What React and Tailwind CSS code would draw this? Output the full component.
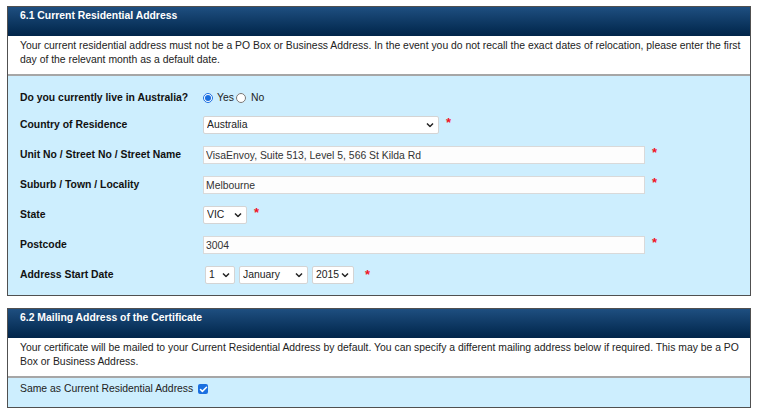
import { Check } from 'lucide-react';

const FONT = { fontFamily: '"Liberation Sans", Arial, sans-serif' };

function Star() {
  return <span className="text-[#f0141e] font-bold text-[13px] leading-none -mt-[6px] ml-[7px]">*</span>;
}

function Chevron() {
  return (
    <svg width="8" height="5" viewBox="0 0 8 5" className="absolute right-[5px] top-1/2 -translate-y-1/2 pointer-events-none">
      <path d="M1 1l3 3 3-3" fill="none" stroke="#222" strokeWidth="1.5" />
    </svg>
  );
}

function Select({ value, className }) {
  return (
    <div className={`relative h-[18px] ${className}`}>
      <select
        defaultValue={value}
        className="appearance-none w-full h-full bg-white border border-[#d4d4d4] rounded-[2px] pl-[3px] pr-[14px] text-[10.4px] text-[#222] outline-none"
      >
        <option>{value}</option>
      </select>
      <Chevron />
    </div>
  );
}

function TextInput({ value }) {
  return (
    <input
      defaultValue={value}
      className="w-[442px] h-[18px] bg-[#fdfdfd] border border-[#d9d9d9] px-[2px] text-[10.4px] text-[#333] outline-none"
    />
  );
}

function Row({ label, children, first }) {
  return (
    <div className={`flex items-center ${first ? 'h-[24px]' : 'h-[30px]'}`}>
      <div className="w-[183px] shrink-0 font-bold text-[#111]">{label}</div>
      <div className="flex items-center">{children}</div>
    </div>
  );
}

function Header({ title }) {
  return (
    <div className="h-[29px] bg-gradient-to-b from-[#1e4f80] to-[#02254a] pl-[12px] pt-[2px] text-white font-bold">
      {title}
    </div>
  );
}

export default function App() {
  return (
    <div className="bg-white w-[759px] h-[417px] pt-[6px] pl-[7px] text-[10.4px] leading-[14px]" style={FONT}>
      <div className="w-[744px] border border-[#505050]">
        <Header title="6.1 Current Residential Address" />
        <div className="bg-white h-[40px] pl-[12px] pt-[3px] pr-[1px] text-[#222] border-b-2 border-[#a6a6a6]">
          Your current residential address must not be a PO Box or Business Address. In the event you do not recall the exact dates of relocation, please enter the first day of the relevant month as a default date.
        </div>
        <div className="bg-[#cdeefe] pl-[12px] pt-[10px] pb-[5px]">
          <Row label="Do you currently live in Australia?" first>
            <label className="flex items-center">
              <input type="radio" name="aus" defaultChecked className="w-[10px] h-[10px] m-0 accent-[#1a6fe0]" />
              <span className="ml-[4px] text-[#222]">Yes</span>
            </label>
            <label className="flex items-center ml-[2px]">
              <input type="radio" name="aus" className="w-[10px] h-[10px] m-0" />
              <span className="ml-[5px] text-[#222]">No</span>
            </label>
          </Row>
          <Row label="Country of Residence">
            <Select value="Australia" className="w-[236px]" />
            <Star />
          </Row>
          <Row label="Unit No / Street No / Street Name">
            <TextInput value="VisaEnvoy, Suite 513, Level 5, 566 St Kilda Rd" />
            <Star />
          </Row>
          <Row label="Suburb / Town / Locality">
            <TextInput value="Melbourne" />
            <Star />
          </Row>
          <Row label="State">
            <Select value="VIC" className="w-[44px]" />
            <Star />
          </Row>
          <Row label="Postcode">
            <TextInput value="3004" />
            <Star />
          </Row>
          <Row label="Address Start Date">
            <div className="flex items-center gap-[4px] ml-[2px]">
              <Select value="1" className="w-[30px]" />
              <Select value="January" className="w-[69px]" />
              <Select value="2015" className="w-[42px]" />
            </div>
            <span className="ml-[4px]"><Star /></span>
          </Row>
        </div>
      </div>

      <div className="w-[744px] border border-[#505050] mt-[12px]">
        <Header title="6.2 Mailing Address of the Certificate" />
        <div className="bg-white h-[40px] pl-[12px] pt-[3px] pr-[10px] text-[#222] border-b-2 border-[#a6a6a6]">
          Your certificate will be mailed to your Current Residential Address by default. You can specify a different mailing address below if required. This may be a PO Box or Business Address.
        </div>
        <div className="bg-[#cdeefe] pl-[12px] h-[29px] pt-[4px] flex items-start">
          <span className="text-[#222]">Same as Current Residential Address</span>
          <span className="ml-[5px] mt-[2px] w-[10px] h-[10px] rounded-[2px] bg-[#1a6fe0] flex items-center justify-center">
            <Check size={9} strokeWidth={4} color="white" />
          </span>
        </div>
      </div>
    </div>
  );
}
